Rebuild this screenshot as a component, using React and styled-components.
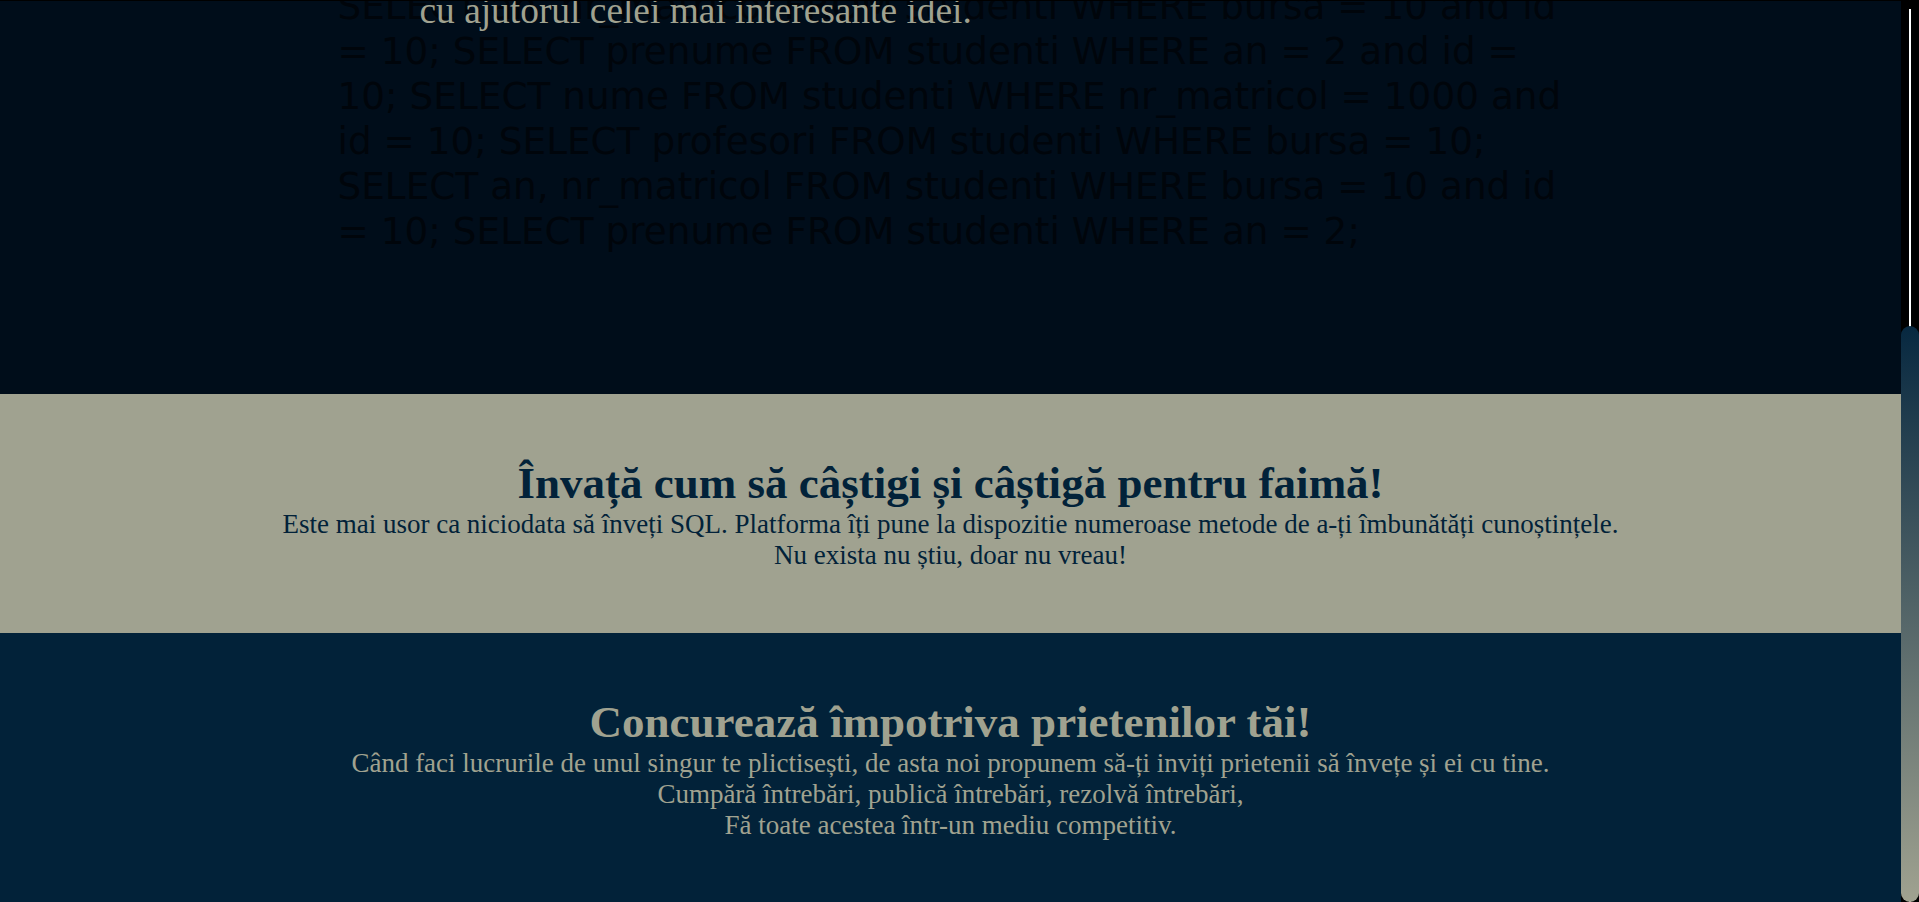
import React, { useCallback, useLayoutEffect, useRef, useState } from 'react';
import styled, { createGlobalStyle } from 'styled-components';

const GlobalStyle = createGlobalStyle`
  html, body {
    margin: 0;
    padding: 0;
    height: 100%;
    overflow: hidden;
    background: #000;
  }
  #root {
    height: 100%;
  }
`;

const Shell = styled.div`
  display: flex;
  height: 100vh;
  box-sizing: border-box;
  border-top: 1px solid #000;
  background: #000;
`;

const Scroller = styled.div`
  flex: 1;
  min-width: 0;
  overflow-y: scroll;
  overflow-x: hidden;
  display: flex;
  flex-direction: column-reverse;
  scrollbar-width: none;

  &::-webkit-scrollbar {
    display: none;
  }
`;

const Rail = styled.div`
  position: relative;
  flex: none;
  width: 18px;
  background:
    linear-gradient(90deg, transparent 8px, #ffffff 8px, #ffffff 10px, transparent 10px)
      0 8px / 100% 100% no-repeat,
    #000;
`;

const Thumb = styled.div`
  position: absolute;
  left: 0;
  width: 18px;
  border-radius: 9px;
  background: linear-gradient(180deg, #072840 0%, #a0a290 100%);
`;

const Page = styled.div`
  flex: none;
`;

const Hero = styled.section`
  height: 889px;
  box-sizing: border-box;
  padding-top: 119px;
  background: #000d1a;
  overflow: hidden;
`;

const Backdrop = styled.div`
  position: relative;
  width: 1226px;
  margin: 0 auto;
`;

const SqlText = styled.p`
  margin: 0;
  font-family: 'DejaVu Sans', 'Liberation Sans', sans-serif;
  font-size: 37.4px;
  line-height: 45px;
  color: #00050b;
`;

const Tagline = styled.p`
  position: absolute;
  left: 82px;
  top: 365px;
  margin: 0;
  font-family: 'Liberation Serif', 'Times New Roman', serif;
  font-size: 37.4px;
  line-height: 43px;
  color: #a0a290;
  white-space: nowrap;
`;

const Feature = styled.section`
  background: ${(p) => (p.$tone === 'light' ? '#a0a290' : '#022239')};
  color: ${(p) => (p.$tone === 'light' ? '#022239' : '#a0a290')};
  padding: ${(p) => (p.$tone === 'light' ? '63px 0 62px' : '63px 0 61px')};
  text-align: center;
  font-family: 'Liberation Serif', 'Times New Roman', serif;
`;

const FeatureTitle = styled.h2`
  margin: 0;
  font-size: 45px;
  font-weight: bold;
  line-height: normal;
`;

const FeatureText = styled.p`
  margin: 0;
  font-size: 27px;
  line-height: normal;
`;

const CYCLE =
  'SELECT an, nr_matricol FROM studenti WHERE bursa = 10 and id = 10; ' +
  'SELECT prenume FROM studenti WHERE an = 2 and id = 10; ' +
  'SELECT nume FROM studenti WHERE nr_matricol = 1000 and id = 10; ' +
  'SELECT profesori FROM studenti WHERE bursa = 10; ';

const SQL =
  CYCLE +
  CYCLE +
  CYCLE +
  'SELECT an, nr_matricol FROM studenti WHERE bursa = 10 and id = 10; ' +
  'SELECT prenume FROM studenti WHERE an = 2;';

const TRACK_OFFSET = 8;

export default function App() {
  const scrollRef = useRef(null);
  const [thumb, setThumb] = useState({ top: 325, height: 576 });

  const measure = useCallback(() => {
    const el = scrollRef.current;
    if (!el) return;
    const { scrollHeight, clientHeight, scrollTop } = el;
    if (!scrollHeight) return;
    const trackLen = clientHeight - TRACK_OFFSET;
    // column-reverse: scrollTop is 0 at the bottom and negative upwards
    const fromTop = scrollHeight - clientHeight + scrollTop;
    setThumb({
      top: TRACK_OFFSET + (trackLen * fromTop) / scrollHeight,
      height: (trackLen * clientHeight) / scrollHeight,
    });
  }, []);

  useLayoutEffect(() => {
    measure();
    const el = scrollRef.current;
    if (!el || typeof ResizeObserver === 'undefined') return undefined;
    const ro = new ResizeObserver(measure);
    ro.observe(el);
    if (el.firstElementChild) ro.observe(el.firstElementChild);
    return () => ro.disconnect();
  }, [measure]);

  return (
    <>
      <GlobalStyle />
      <Shell>
        <Scroller ref={scrollRef} onScroll={measure}>
          <Page>
            <Hero>
              <Backdrop>
                <SqlText>{SQL}</SqlText>
                <Tagline>cu ajutorul celei mai interesante idei.</Tagline>
              </Backdrop>
            </Hero>

            <Feature $tone="light">
              <FeatureTitle>Învață cum să câștigi și câștigă pentru faimă!</FeatureTitle>
              <FeatureText>
                Este mai usor ca niciodata să înveți SQL. Platforma îți pune la dispozitie numeroase metode de a-ți îmbunătăți cunoștințele.
                <br />
                Nu exista nu știu, doar nu vreau!
              </FeatureText>
            </Feature>

            <Feature $tone="dark">
              <FeatureTitle>Concurează împotriva prietenilor tăi!</FeatureTitle>
              <FeatureText>
                Când faci lucrurile de unul singur te plictisești, de asta noi propunem să-ți inviți prietenii să învețe și ei cu tine.
                <br />
                Cumpără întrebări, publică întrebări, rezolvă întrebări,
                <br />
                Fă toate acestea într-un mediu competitiv.
              </FeatureText>
            </Feature>
          </Page>
        </Scroller>
        <Rail aria-hidden="true">
          <Thumb style={{ top: thumb.top, height: thumb.height }} />
        </Rail>
      </Shell>
    </>
  );
}
